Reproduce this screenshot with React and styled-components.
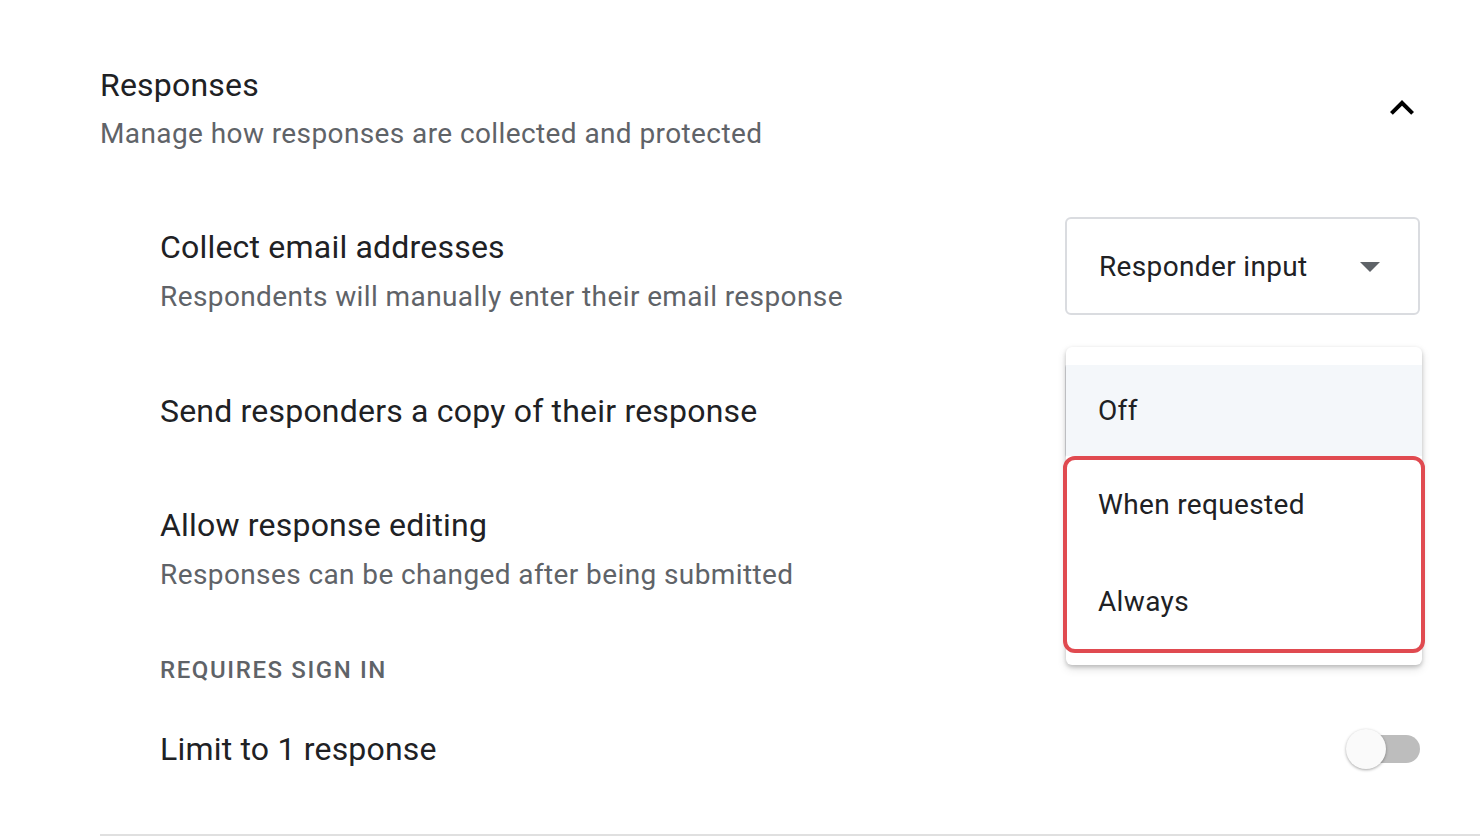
import React from "react";
import styled, { createGlobalStyle } from "styled-components";

const GlobalStyle = createGlobalStyle`
  body {
    margin: 0;
    background: #fff;
    font-family: Roboto, "Liberation Sans", sans-serif;
    color: #202124;
  }
`;

export default function App() {
  return (
    <>
      <GlobalStyle />
      <Page>
        <SectionHead>
          <div>
            <SectionTitle>Responses</SectionTitle>
            <SectionSub>Manage how responses are collected and protected</SectionSub>
          </div>
          <IconButton aria-label="Collapse">
            <svg width="48" height="48" viewBox="0 0 24 24">
              <path d="M12 8l-6 6 1.41 1.41L12 10.83l4.59 4.58L18 14z" fill="#000" />
            </svg>
          </IconButton>
        </SectionHead>

        <Settings>
          <Row $top={64}>
            <RowText>
              <RowTitle>Collect email addresses</RowTitle>
              <RowDesc>Respondents will manually enter their email response</RowDesc>
            </RowText>
            <Select>
              <span>Responder input</span>
              <Caret />
            </Select>
          </Row>

          <Row $top={46}>
            <RowText $center>
              <RowTitle>Send responders a copy of their response</RowTitle>
            </RowText>
            <SelectWrap>
              <Select>
                <span>Off</span>
                <Caret />
              </Select>
              <Menu>
                <MenuItem $active>Off</MenuItem>
                <MenuItem>When requested</MenuItem>
                <MenuItem>Always</MenuItem>
                <Highlight />
              </Menu>
            </SelectWrap>
          </Row>

          <Row $top={35}>
            <RowText>
              <RowTitle>Allow response editing</RowTitle>
              <RowDesc>Responses can be changed after being submitted</RowDesc>
            </RowText>
            <Toggle />
          </Row>

          <Label>Requires sign in</Label>

          <Row $top={46} $center>
            <RowText $center>
              <RowTitle>Limit to 1 response</RowTitle>
            </RowText>
            <Toggle />
          </Row>
        </Settings>
        <Divider />
      </Page>
    </>
  );
}

function Caret() {
  return (
    <svg width="48" height="48" viewBox="0 0 24 24">
      <path d="M7 10l5 5 5-5z" fill="#5f6368" />
    </svg>
  );
}

const Page = styled.div`
  padding: 66px 0 0 100px;
  height: 840px;
  box-sizing: border-box;
  overflow: hidden;
`;

const SectionHead = styled.div`
  display: flex;
  justify-content: space-between;
  align-items: flex-start;
  padding-right: 54px;
`;

const SectionTitle = styled.div`
  font-size: 32px;
  line-height: 38px;
  letter-spacing: 0.2px;
  color: #202124;
`;

const SectionSub = styled.div`
  margin-top: 11px;
  font-size: 28px;
  line-height: 38px;
  letter-spacing: 0.4px;
  color: #5f6368;
`;

const IconButton = styled.div`
  margin-top: 18px;
  width: 48px;
  height: 48px;
  display: flex;
`;

const Settings = styled.div`
  padding: 0 60px 0 60px;
`;

const Row = styled.div`
  margin-top: ${(p) => p.$top}px;
  display: flex;
  justify-content: space-between;
  align-items: ${(p) => (p.$center ? "center" : "flex-start")};
`;

const RowText = styled.div`
  padding-top: ${(p) => (p.$center ? 0 : 11)}px;
  align-self: ${(p) => (p.$center ? "center" : "flex-start")};
`;

const RowTitle = styled.div`
  font-size: 32px;
  line-height: 38px;
  letter-spacing: 0.2px;
  color: #202124;
`;

const RowDesc = styled.div`
  margin-top: 12px;
  font-size: 28px;
  line-height: 38px;
  letter-spacing: 0.4px;
  color: #5f6368;
`;

const SelectWrap = styled.div`
  position: relative;
`;

const Select = styled.div`
  width: 355px;
  height: 98px;
  box-sizing: border-box;
  border: 2px solid #dadce0;
  border-radius: 6px;
  display: flex;
  align-items: center;
  justify-content: space-between;
  padding: 0 24px 0 32px;
  font-size: 28px;
  letter-spacing: 0.35px;
  color: #202124;
`;

const Menu = styled.div`
  position: absolute;
  top: -15px;
  left: 1px;
  width: 356px;
  padding: 18px 0 15px;
  background: #fff;
  border-radius: 6px;
  box-shadow: 0 2px 4px rgba(0, 0, 0, 0.2), 0 4px 10px rgba(0, 0, 0, 0.12);
  z-index: 2;
`;

const MenuItem = styled.div`
  height: ${(p) => (p.$active ? 91 : 97)}px;
  display: flex;
  align-items: center;
  padding-left: 32px;
  font-size: 28px;
  letter-spacing: 0.35px;
  color: #202124;
  background: ${(p) => (p.$active ? "#f4f7fa" : "#fff")};
`;

const Highlight = styled.div`
  position: absolute;
  left: -3px;
  right: -3px;
  top: 109px;
  height: 197px;
  box-sizing: border-box;
  border: 4px solid #e04a50;
  border-radius: 12px;
`;

const Label = styled.div`
  margin-top: 62px;
  font-size: 24px;
  line-height: 28px;
  font-weight: 500;
  letter-spacing: 1.6px;
  text-transform: uppercase;
  color: #5f6368;
`;

const Toggle = styled.div`
  position: relative;
  width: 70px;
  height: 28px;
  border-radius: 14px;
  background: #bdbdbd;

  &::after {
    content: "";
    position: absolute;
    left: -4px;
    top: -6px;
    width: 40px;
    height: 40px;
    border-radius: 50%;
    background: #fafafa;
    box-shadow: 0 1px 3px rgba(0, 0, 0, 0.35);
  }
`;

const Divider = styled.div`
  margin-top: 66px;
  height: 2px;
  background: #e0e0e0;
`;
